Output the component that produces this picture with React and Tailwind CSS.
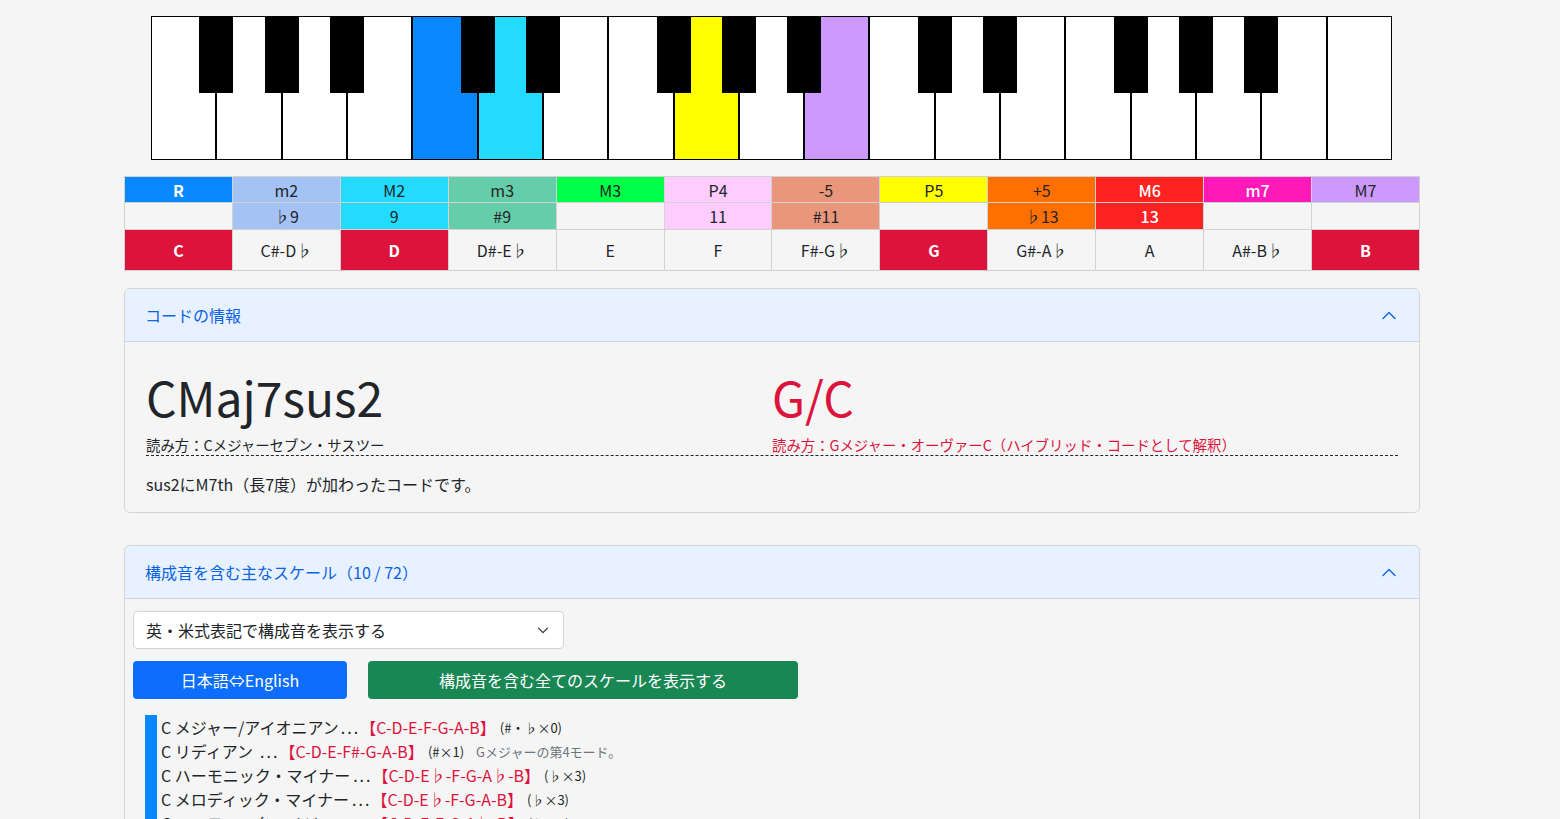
import React from "react";

const KW = 1241 / 19;
const whiteNames = ["F","G","A","B","C","D","E","F","G","A","B","C","D","E","F","G","A","B","C"];
const whiteFill = { 4: "#0788ff", 5: "#22dbff", 8: "#ffff00", 10: "#cc99ff" };

function Piano() {
  const blacks = [];
  whiteNames.forEach((n, i) => {
    if (i < 18 && ["F", "G", "A", "C", "D"].includes(n)) blacks.push((i + 1) * KW);
  });
  return (
    <svg width="1241" height="144" viewBox="0 0 1241 144" className="ml-[27px] block" shapeRendering="crispEdges">
      {whiteNames.map((n, i) => (
        <rect key={i} x={i * KW + 0.5} y={0.5} width={KW - 1} height={143} fill={whiteFill[i] || "#ffffff"} stroke="#000" strokeWidth="1" />
      ))}
      {blacks.map((cx, i) => (
        <rect key={"b" + i} x={cx - 17} y={0} width={34} height={77} fill="#000" />
      ))}
    </svg>
  );
}

const intervals = [
  { t: "R", s: "", bg: "bg-[#0788ff]", fg: "text-white font-bold" },
  { t: "m2", s: "♭9", bg: "bg-[#a4c2f4]", fg: "" },
  { t: "M2", s: "9", bg: "bg-[#22dbff]", fg: "" },
  { t: "m3", s: "#9", bg: "bg-[#66cdaa]", fg: "" },
  { t: "M3", s: "", bg: "bg-[#00ff48]", fg: "" },
  { t: "P4", s: "11", bg: "bg-[#ffccff]", fg: "" },
  { t: "-5", s: "#11", bg: "bg-[#e9967a]", fg: "" },
  { t: "P5", s: "", bg: "bg-[#ffff00]", fg: "" },
  { t: "+5", s: "♭13", bg: "bg-[#ff7000]", fg: "" },
  { t: "M6", s: "13", bg: "bg-[#ff2222]", fg: "text-white font-medium" },
  { t: "m7", s: "", bg: "bg-[#ff19b8]", fg: "text-white font-medium" },
  { t: "M7", s: "", bg: "bg-[#cc99ff]", fg: "" },
];

const notes = [
  ["C", true], ["C#-D♭", false], ["D", true], ["D#-E♭", false], ["E", false], ["F", false],
  ["F#-G♭", false], ["G", true], ["G#-A♭", false], ["A", false], ["A#-B♭", false], ["B", true],
];

function IntervalTable() {
  return (
    <div className="mt-4 grid grid-cols-12 border-l border-t border-[#d2d2d2] text-[16px] text-[#212529]">
      {intervals.map((c, i) => (
        <div key={"h" + i} className={`h-[26px] flex items-center justify-center border-r border-b border-[#d2d2d2] leading-none ${c.bg} ${c.fg}`}>
          {c.t}
        </div>
      ))}
      {intervals.map((c, i) => (
        <div key={"s" + i} className={`h-[27px] flex items-center justify-center border-r border-b border-[#d2d2d2] leading-none ${c.s ? c.bg : "bg-[#f5f5f5]"} ${c.s ? c.fg : ""}`}>
          {c.s}
        </div>
      ))}
      {notes.map(([n, on], i) => (
        <div key={"n" + i} className={`h-[41px] flex items-center justify-center border-r border-b border-[#d2d2d2] leading-none ${on ? "bg-[#dc143c] text-white font-bold" : "bg-[#f5f5f5]"}`}>
          {n}
        </div>
      ))}
    </div>
  );
}

function ChevronUp() {
  return (
    <svg width="16" height="16" viewBox="0 0 16 16" fill="none" stroke="#0c63e4" strokeWidth="1.4" strokeLinecap="round" strokeLinejoin="round">
      <path d="M2 11.5 L8 5.5 L14 11.5" />
    </svg>
  );
}

function CardHeader({ children }) {
  return (
    <div className="h-[53px] flex items-center justify-between pl-[20px] pr-[22px] bg-[#e7f1ff] border-b border-[#c9d3e0] rounded-t-[6px] text-[16px] text-[#0c63e4]">
      <span>{children}</span>
      <ChevronUp />
    </div>
  );
}

const scales = [
  { name: "C メジャー/アイオニアン", gap: "ml-[2px]", notes: "【C-D-E-F-G-A-B】", acc: "(#・♭×0)", note: "" },
  { name: "C リディアン", gap: "ml-[7px]", notes: "【C-D-E-F#-G-A-B】", acc: "(#×1)", note: "Gメジャーの第4モード。" },
  { name: "C ハーモニック・マイナー", gap: "ml-[3px]", notes: "【C-D-E♭-F-G-A♭-B】", acc: "(♭×3)", note: "" },
  { name: "C メロディック・マイナー", gap: "ml-[3px]", notes: "【C-D-E♭-F-G-A-B】", acc: "(♭×3)", note: "" },
  { name: "C ハーモニック・メジャー", gap: "ml-[3px]", notes: "【C-D-E-F-G-A♭-B】", acc: "(♭×1)", note: "" },
  { name: "C リディアン・オーギュメンテッド", gap: "ml-[3px]", notes: "【C-D-E-F#-G#-A-B】", acc: "(#×2)", note: "" },
  { name: "C リディアン・シャープ2", gap: "ml-[3px]", notes: "【C-D#-E-F#-G-A-B】", acc: "(#×2)", note: "" },
  { name: "C ダブル・ハーモニック", gap: "ml-[3px]", notes: "【C-D♭-E-F-G-A♭-B】", acc: "(♭×2)", note: "" },
  { name: "C メジャー・ペンタトニック", gap: "ml-[3px]", notes: "【C-D-E-G-A】", acc: "(#・♭×0)", note: "" },
  { name: "C メジャー・ブルース", gap: "ml-[3px]", notes: "【C-D-E♭-E-G-A】", acc: "(♭×1)", note: "" },
];

export default function App() {
  return (
    <div className="min-h-screen bg-[#f5f5f5] font-['Noto_Sans_CJK_JP',sans-serif] text-[#212529]">
      <div className="w-[1296px] ml-[124px] pt-4 pb-10">
        <Piano />
        <IntervalTable />

        <div className="mt-[17px] border border-[#d4d4d4] rounded-[6px]">
          <CardHeader>コードの情報</CardHeader>
          <div className="px-[21px] pt-[25px] pb-[16px]">
            <div className="grid grid-cols-2 border-b border-dashed border-[#212529]">
              <div>
                <div className="text-[48px] leading-[58px]">CMaj7sus2</div>
                <div className="mt-[9px] text-[14.4px] leading-[21px]">読み方：Cメジャーセブン・サスツー</div>
              </div>
              <div className="text-[#dc143c]">
                <div className="text-[48px] leading-[58px]">G/C</div>
                <div className="mt-[9px] text-[14.4px] leading-[21px]">読み方：Gメジャー・オーヴァーC（ハイブリッド・コードとして解釈）</div>
              </div>
            </div>
            <p className="mt-4 text-[16px] leading-[24px]">sus2にM7th（長7度）が加わったコードです。</p>
          </div>
        </div>

        <div className="mt-[32px] border border-[#d4d4d4] rounded-[6px]">
          <CardHeader>構成音を含む主なスケール（10 / 72）</CardHeader>
          <div className="px-2 pt-3 pb-4">
            <div className="w-[431px] h-[38px] flex items-center justify-between pl-3 pr-[14px] bg-white border border-[#ced4da] rounded-[4px] text-[16px]">
              <span>英・米式表記で構成音を表示する</span>
              <svg width="12" height="12" viewBox="0 0 16 16" fill="none" stroke="#343a40" strokeWidth="1.8" strokeLinecap="round" strokeLinejoin="round">
                <path d="M2 5.5 L8 11.5 L14 5.5" />
              </svg>
            </div>
            <div className="mt-[12px] flex gap-[21px]">
              <button className="w-[214px] h-[38px] bg-[#0d6efd] text-white text-[16px] rounded-[4px]">日本語⇔English</button>
              <button className="w-[430px] h-[38px] bg-[#198754] text-white text-[16px] rounded-[4px]">構成音を含む全てのスケールを表示する</button>
            </div>
            <div className="mt-[16px] ml-3 border-l-[12px] border-[#0788ff] pl-1">
              {scales.map((s, i) => (
                <div key={i} className="h-[24px] flex items-center text-[16px] leading-none whitespace-nowrap">
                  <span>{s.name}</span>
                  <span className={`${s.gap} tracking-[2px]`}>...</span>
                  <span className="text-[#dc143c]">{s.notes}</span>
                  <span className="ml-1 text-[13px]">{s.acc}</span>
                  {s.note && <span className="ml-3 text-[13px] text-[#6c757d]">{s.note}</span>}
                </div>
              ))}
            </div>
          </div>
        </div>
      </div>
    </div>
  );
}
